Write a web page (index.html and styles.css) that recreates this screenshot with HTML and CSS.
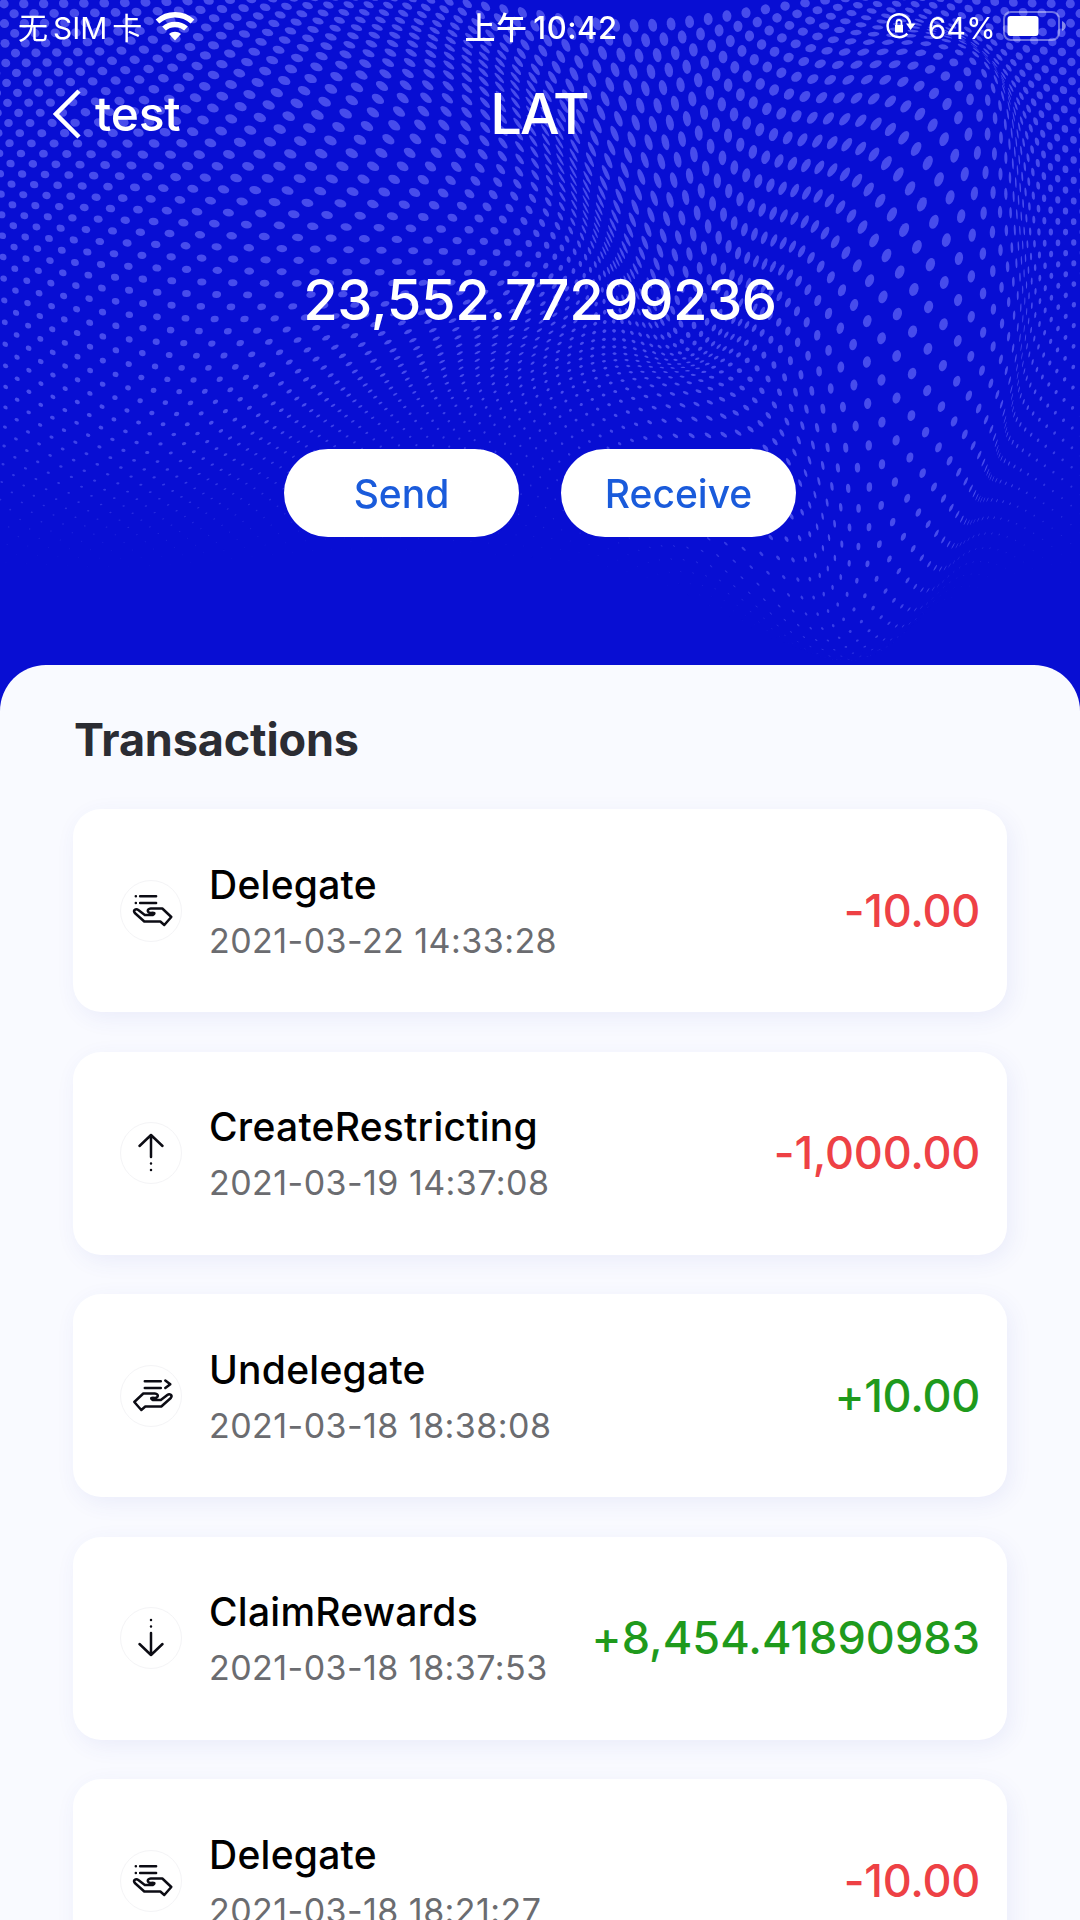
FILE: index.html
```html
<!DOCTYPE html>
<html lang="zh">
<head>
<meta charset="utf-8">
<meta name="viewport" content="width=1080">
<title>LAT</title>
<link rel="stylesheet" href="styles.css">
</head>
<body>
<svg class="sprite" width="0" height="0" aria-hidden="true">
  <symbol id="i-delegate" viewBox="0.700 2 60 60"><path d="M15.500 17.300h.1M19.800 17.300h16M15.500 24h.1M19.800 24h16M24 42.500 14.500 34C12.500 31.500 15.500 29 18 31l6.500 5h8c3-2 1.500-2.500-2-2-4-.5-4-4 0-4.500h11.500l9 8.500-7 8-4-3.500z"/></symbol>
  <symbol id="i-up" viewBox="2 2 60 60"><path d="M20.500 25 32 14l11.500 11M32 14v22M32 42.500v.1M32 49v.1"/></symbol>
  <symbol id="i-undelegate" viewBox="0.700 2 60 60"><path d="M24.500 17.300h16M24.500 24h16M45 16.500l5 3.700-5 3.800M41 42.500 50.500 34c2-2.500-1-5-3.500-3l-6.500 5h-8c-3-2-1.500-2.500 2-2 4-.5 4-4 0-4.500H23L14 38l7 8 4-3.500z"/></symbol>
  <symbol id="i-down" viewBox="2 2 60 60"><path d="M20.500 38 32 49l11.500-11M32 49V27M32 20.500v.1M32 14v.1"/></symbol>
</svg>
<div class="phone">
  <header class="hero">
    <canvas class="dots" id="dots" width="1080" height="700"></canvas>
    <div class="status">
      <div class="status-side"><span class="carrier">无 SIM 卡</span>
        <svg class="wifi" width="40" height="30" viewBox="0 0 40 30"><path class="arc" d="M2.500 10.500C12.500 1.500 27.500 1.500 37.500 10.500M9 17.500c6-5.500 16-5.500 22 0"/><path class="fill" d="M20 29.500l-6-6.500c3.500-3 8.500-3 12 0z"/></svg>
      </div>
      <span class="clock">上午 10:42</span>
      <div class="status-side right">
        <svg class="lock" width="30" height="28" viewBox="0 0 30 28"><path class="ring" d="M21.300 21.600A11.400 11.400 0 1 1 24.300 12"/><path class="fill" d="M20 11.500h9.500L24.500 18zM9 13h8v7.500h-8z"/><path class="ring thin" d="M10.500 13.500v-3a2.500 2.500 0 0 1 5 0v3"/></svg>
        <span class="percent">64%</span>
        <svg class="battery" width="64" height="30" viewBox="0 0 64 30"><rect class="shell" x="1" y="1" width="55" height="28" rx="7"/><rect class="fill" x="4.500" y="5" width="31" height="20" rx="3"/><path class="nub" d="M59 10c5 2 5 8 0 10z"/></svg>
      </div>
    </div>
    <nav class="nav">
      <a class="back"><svg width="28" height="50" viewBox="0 0 28 50"><path d="M26 2 3 25l23 23"/></svg><span>test</span></a>
      <h1>LAT</h1>
      <span></span>
    </nav>
    <div class="balance">23,552.77299236</div>
    <div class="actions"><button>Send</button><button>Receive</button></div>
  </header>
  <main class="sheet">
    <h2>Transactions</h2>
    <ul class="list">
      <li class="card"><svg class="icon"><use href="#i-delegate"/></svg><div class="info"><strong>Delegate</strong><time>2021-03-22 14:33:28</time></div><b class="amount out">-10.00</b></li>
      <li class="card"><svg class="icon"><use href="#i-up"/></svg><div class="info"><strong>CreateRestricting</strong><time>2021-03-19 14:37:08</time></div><b class="amount out">-1,000.00</b></li>
      <li class="card"><svg class="icon"><use href="#i-undelegate"/></svg><div class="info"><strong>Undelegate</strong><time>2021-03-18 18:38:08</time></div><b class="amount in">+10.00</b></li>
      <li class="card"><svg class="icon"><use href="#i-down"/></svg><div class="info"><strong>ClaimRewards</strong><time>2021-03-18 18:37:53</time></div><b class="amount in wide">+8,454.41890983</b></li>
      <li class="card"><svg class="icon"><use href="#i-delegate"/></svg><div class="info"><strong>Delegate</strong><time>2021-03-18 18:21:27</time></div><b class="amount out">-10.00</b></li>
    </ul>
  </main>
</div>
<script src="dots.js"></script>
</body>
</html>
```
FILE: styles.css
```css
* { box-sizing: border-box; margin: 0; padding: 0; }
body { width: 1080px; height: 1920px; overflow: hidden; background: #080ed3; font-family: Inter, "Noto Sans CJK SC", sans-serif; }
.sprite { position: absolute; }
.phone { height: 1920px; overflow: hidden; display: flex; flex-direction: column; }
.hero { position: relative; flex: none; height: 665px; color: #fff; }
.dots { position: absolute; left: 0; top: 0; }
.status, .nav, .balance, .actions { position: relative; }
.status { height: 56px; padding: 0 13px 0 18px; display: grid; grid-template-columns: 1fr auto 1fr; align-items: center; font-size: 30px; line-height: 52px; }
.status-side { display: flex; align-items: center; gap: 13px; }
.status-side.right { justify-content: flex-end; gap: 7px; }
.carrier { word-spacing: -3.500px; }
.percent { letter-spacing: .3px; }
.lock { margin-right: 5px; }
.clock { margin-left: -3px; font-weight: 500; font-size: 31px; word-spacing: -3px; letter-spacing: .5px; }
svg { flex: none; fill: none; }
.wifi, .lock, .battery { margin-top: -4px; }
.fill { fill: #fff; }
.arc { stroke: #fff; stroke-width: 5.500; }
.ring { stroke: #fff; stroke-width: 2.500; }
.thin { stroke-width: 1.800; }
.shell { stroke: rgba(255,255,255,.4); stroke-width: 2; }
.nub { fill: rgba(255,255,255,.5); }
.nav { height: 116px; padding: 0 53px; display: grid; grid-template-columns: 1fr auto 1fr; align-items: center; }
.back { display: flex; align-items: center; gap: 14px; font-size: 48px; font-weight: 500; letter-spacing: -.2px; }
.back svg { stroke: #fff; stroke-width: 4.500; }
.back span { padding-bottom: 2px; }
h1 { margin-left: -2px; font-size: 56px; font-weight: 500; letter-spacing: -1.800px; }
.balance { height: 255px; display: flex; align-items: center; justify-content: center; font-size: 56px; font-weight: 500; letter-spacing: -.4px; }
.actions { margin-top: 22px; display: flex; justify-content: center; gap: 42px; }
button { width: 235px; height: 88px; border: 0; border-radius: 44px; background: #fff; color: #1a5bdb; font: 500 39px Inter, sans-serif; }
.sheet { flex: 1; background: #f9faff; border-radius: 46px 46px 0 0; padding: 47px 73px 0; }
h2 { height: 97px; padding-left: 1px; font-size: 45px; line-height: 56px; font-weight: 700; letter-spacing: -.15px; color: #2b2c33; }
.list { list-style: none; display: grid; gap: 39.600px; }
.card { height: 203px; border-radius: 28px; background: #fff; box-shadow: 4px 6px 22px rgba(60,80,190,.08); padding: 0 27px 0 47px; display: flex; align-items: center; }
.icon { width: 62px; height: 62px; border: 1.500px solid #f4f4f6; border-radius: 50%; stroke: #0c0c14; stroke-width: 2.500; stroke-linecap: round; stroke-linejoin: round; }
.info { margin: 2px 0 0 27px; display: grid; gap: 10px; }
strong { font-size: 39px; line-height: 48px; font-weight: 500; letter-spacing: .25px; color: #000; }
time { font-size: 34px; line-height: 44px; letter-spacing: .45px; color: #6b6c70; }
.amount { margin: -1px 0 0 auto; font-size: 45px; font-weight: 500; letter-spacing: -.25px; }
.wide { letter-spacing: .05px; }
.out { color: #ee4145; }
.in { color: #1f9a1c; }
```
FILE: dots.js
```js
// Halftone lattice bent by a few smooth bumps: [centre x, centre y, spread x, spread y, push x, push y]
const bumps = [
  [350, 230, 200, 150, 175, 20],
  [350, 90, 180, 80, 10, -30],
  [620, 180, 140, 130, 45, 140],
  [870, 140, 110, 90, 75, -80],
  [910, 290, 90, 120, 75, 0],
  [330, 480, 170, 100, 30, -20],
  [820, 430, 140, 150, 30, 200],
  [130, 400, 140, 130, 25, 45],
  [720, 370, 70, 90, 50, 20]
];
function warp(x, y) {
  let X = x, Y = y;
  for (const [cx, cy, sx, sy, dx, dy] of bumps) {
    const g = Math.exp(-(((x - cx) / sx) ** 2) - ((y - cy) / sy) ** 2);
    X += dx * g;
    Y += dy * g;
  }
  return [X, Y];
}
const ctx = document.getElementById('dots').getContext('2d');
ctx.fillStyle = '#474cec';
for (let row = 0; row * 9.900 < 600; row++) {
  for (let col = -1; col < 57; col++) {
    const x = 3 + col * 19.400 + (row % 2) * 9.700, y = 4 + row * 9.900;
    const [X, Y] = warp(x, y), [ax, ay] = warp(x + 1, y), [bx, by] = warp(x, y + 1);
    const r = 4.600 * (1 - (y / 600) ** 1.200);
    if (r < 0.300) continue;
    ctx.globalAlpha = Math.min(1, (600 - y) / 220);
    ctx.setTransform(ax - X, ay - Y, bx - X, by - Y, X, Y);
    ctx.beginPath();
    ctx.arc(0, 0, r, 0, 7);
    ctx.fill();
  }
}
```
